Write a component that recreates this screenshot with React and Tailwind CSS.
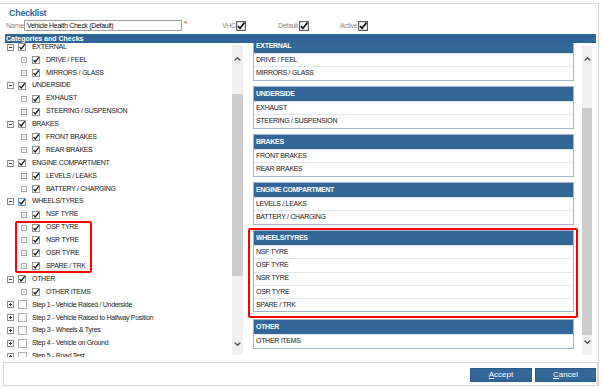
import React from 'react'

const tree = [
  { name: 'EXTERNAL', items: ['DRIVE / FEEL', 'MIRRORS / GLASS'] },
  { name: 'UNDERSIDE', items: ['EXHAUST', 'STEERING / SUSPENSION'] },
  { name: 'BRAKES', items: ['FRONT BRAKES', 'REAR BRAKES'] },
  { name: 'ENGINE COMPARTMENT', items: ['LEVELS / LEAKS', 'BATTERY / CHARGING'] },
  { name: 'WHEELS/TYRES', items: ['NSF TYRE', 'OSF TYRE', 'NSR TYRE', 'OSR TYRE', 'SPARE / TRK'], focus: true },
  { name: 'OTHER', items: ['OTHER ITEMS'] },
]

const steps = [
  'Step 1 - Vehicle Raised / Underside',
  'Step 2 - Vehicle Raised to Halfway Position',
  'Step 3 - Wheels & Tyres',
  'Step 4 - Vehicle on Ground',
  'Step 5 - Road Test',
]

const CheckBox = ({ size = 8, checked = true, border = '#8a8a8a' }) => (
  <svg width={size} height={size} viewBox="0 0 8 8" className="shrink-0">
    <rect x="0.5" y="0.5" width="7" height="7" fill="#fff" stroke={border} strokeWidth="0.9" />
    {checked && <path d="M1.5 4.1 3.2 5.9 6.8 1.3" fill="none" stroke="#111" strokeWidth="1.3" />}
  </svg>
)

const Expander = ({ plus }) => (
  <svg width="7" height="7" viewBox="0 0 7 7" className="shrink-0">
    <rect x="0.5" y="0.5" width="6" height="6" fill="#fff" stroke="#8c8c8c" />
    <path d="M2 3.5h3" stroke="#333" />
    {plus && <path d="M3.5 2v3" stroke="#333" />}
  </svg>
)

const Leaf = () => (
  <svg width="6" height="6" viewBox="0 0 6 6" className="shrink-0">
    <rect x="0.5" y="0.5" width="5" height="5" fill="#fff" stroke="#a8a8a8" />
    <rect x="2.5" y="2.5" width="1" height="1" fill="#666" />
  </svg>
)

const Chevron = ({ down }) => (
  <svg width="7" height="4" viewBox="0 0 7 4" className="mx-auto block">
    <path d={down ? 'M0.6 0.6 3.5 3.3 6.4 0.6' : 'M0.6 3.4 3.5 0.7 6.4 3.4'} fill="none" stroke="#505050" strokeWidth="1.3" />
  </svg>
)

const Card = ({ name, items, className = '' }) => (
  <div className={`border border-[#a3b6cd] bg-white ${className}`}>
    <div className="h-[14px] bg-[#336699] text-white font-bold flex items-center pl-[2px]">{name}</div>
    {items.map(item => (
      <div key={item} className="h-[13.25px] border-t border-[#e3e8ef] flex items-center pl-[2px]">
        {item}
      </div>
    ))}
  </div>
)

export default function App() {
  return (
    <div className="relative w-[602px] h-[388px] bg-white overflow-hidden font-['Liberation_Sans',Arial,sans-serif] text-[7px] tracking-[-0.3px] text-[#222]">
      <div className="mt-[3px] w-[599px] h-[383px] border-t border-r border-[#d6d6d6] flex flex-col">
        <div className="h-[15px] pl-[9px] pt-[5px] text-[9px] leading-[9px] font-bold tracking-[-0.3px] text-[#2f66a0]">
          Checklist
        </div>

        <div className="h-[13px] flex items-center leading-none">
          <span className="w-[24px] pl-[6px] text-[#8a8a8a]">Name</span>
          <div className="w-[158px] h-[11px] border border-[#a0a0a0] flex items-center pl-[2px] text-[#111]">
            Vehicle Health Check (Default)
          </div>
          <span className="w-[40px] pl-[2px] self-start mt-[1px] text-[8px] text-[#e00]">*</span>
          <span className="w-[14px] text-right pr-[1px] text-[#8a8a8a]">VHC</span>
          <CheckBox size={10} border="#555" />
          <span className="w-[31px]" />
          <span className="w-[22px] text-right pr-[1px] text-[#8a8a8a]">Default</span>
          <CheckBox size={10} border="#555" />
          <span className="w-[31px]" />
          <span className="w-[18px] text-right pr-[1px] text-[#8a8a8a]">Active</span>
          <CheckBox size={10} border="#555" />
        </div>

        <div className="mt-[2px] ml-[5px] w-[591px] h-[9px] bg-[#2f6497] pl-[1px] font-bold tracking-normal leading-[9px] text-white">
          Categories and Checks
        </div>

        <div className="h-[314px] flex">
          <div className="w-[232px] h-[314px] overflow-hidden">
            <div className="-mt-[2.4px]">
              {tree.map(group => (
                <div key={group.name}>
                  <div className="h-[12.9px] flex items-center pl-[7px]">
                    <Expander />
                    <span className="ml-[4px]">
                      <CheckBox border={group.focus ? '#4d95dc' : '#8a8a8a'} />
                    </span>
                    <span className="ml-[6px]">{group.name}</span>
                  </div>
                  {group.items.map(item => (
                    <div key={item} className="h-[12.9px] flex items-center pl-[21px]">
                      <Leaf />
                      <span className="ml-[5px]">
                        <CheckBox />
                      </span>
                      <span className="ml-[6px]">{item}</span>
                    </div>
                  ))}
                </div>
              ))}
              {steps.map(step => (
                <div key={step} className="h-[12.9px] flex items-center pl-[7px]">
                  <Expander plus />
                  <span className="ml-[4px]">
                    <CheckBox size={9} checked={false} border="#adadad" />
                  </span>
                  <span className="ml-[5px]">{step}</span>
                </div>
              ))}
            </div>
          </div>

          <div className="mt-[2px] w-[11px] h-[310px] bg-[#f0f0f0] flex flex-col">
            <div className="h-[49px] pt-[12px]">
              <Chevron />
            </div>
            <div className="h-[182px] bg-[#cdcdcd]" />
            <div className="flex-1 flex flex-col justify-end pb-[9px]">
              <Chevron down />
            </div>
          </div>

          <div className="ml-[10px] w-[321px] h-[314px] overflow-hidden">
            <div className="-mt-[5px] flex flex-col gap-[5.5px]">
              {tree.map((group, i) => (
                <Card key={group.name} name={group.name} items={group.items} className={i === tree.length - 1 ? 'mt-[1.5px]' : ''} />
              ))}
            </div>
          </div>

          <div className="ml-[8px] mt-[3px] w-[10px] h-[309px] bg-[#f0f0f0] flex flex-col">
            <div className="h-[62px] pt-[11px]">
              <Chevron />
            </div>
            <div className="h-[227px] bg-[#cdcdcd]" />
            <div className="flex-1 flex flex-col justify-end pb-[11px]">
              <Chevron down />
            </div>
          </div>
        </div>

        <div className="mt-[5px] ml-[3px] h-[24px] border border-[#d6d6d6] flex items-start justify-end gap-[3px] pt-[5px] pr-[1px]">
          <button className="w-[62px] h-[14px] bg-[#336699] border border-[#2b5a88] text-white text-[8px] tracking-normal leading-none">
            <span className="underline">A</span>ccept
          </button>
          <button className="w-[61px] h-[14px] bg-[#336699] border border-[#2b5a88] text-white text-[8px] tracking-normal leading-none">
            <span className="underline">C</span>ancel
          </button>
        </div>
      </div>

      <div className="absolute left-[15px] top-[221px] w-[77px] h-[52px] border-2 border-[#ff0000] rounded-[2px] pointer-events-none" />
      <div className="absolute left-[248px] top-[228px] w-[330px] h-[90px] border-2 border-[#ff0000] rounded-[2px] pointer-events-none" />
    </div>
  )
}
